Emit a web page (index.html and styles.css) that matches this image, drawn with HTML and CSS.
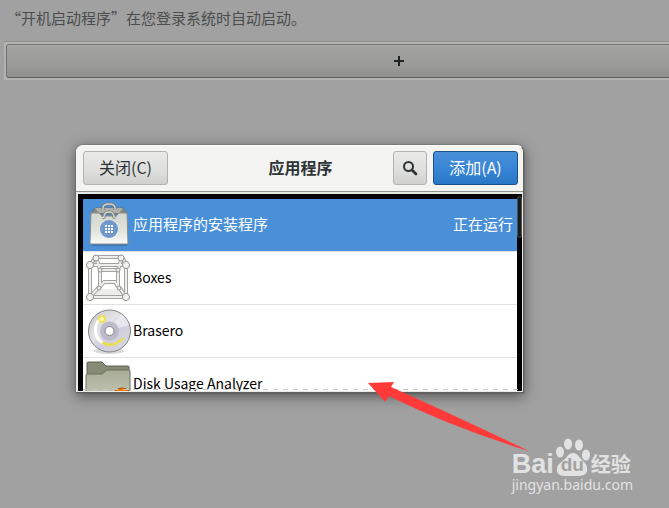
FILE: index.html
```html
<!DOCTYPE html>
<html lang="zh-CN">
<head>
    <meta charset="UTF-8">
    <meta name="viewport" content="width=device-width, initial-scale=1.0">
    <title>开机启动程序</title>
    <link rel="stylesheet" href="styles.css">
</head>
<body>
<main class="window">
    <p class="intro">“开机启动程序”在您登录系统时自动启动。</p>
    <div class="add-frame">
        <button class="add-row" type="button" aria-label="添加启动程序">
            <svg width="10" height="10" viewBox="0 0 10 10"><path d="M4 0h2v4h4v2H6v4H4V6H0V4h4z"/></svg>
        </button>
    </div>
</main>

<section class="dialog" role="dialog" aria-labelledby="dialog-title">
    <header class="dialog-header">
        <button class="btn btn-close" type="button">关闭(C)</button>
        <h1 id="dialog-title">应用程序</h1>
        <div class="header-actions">
            <button class="btn btn-search" type="button" aria-label="搜索">
                <svg width="16" height="16" viewBox="0 0 16 16" fill="none" stroke="#2e3436">
                    <circle cx="6.5" cy="6.5" r="4.5" stroke-width="2"/>
                    <path d="M10 10l4 4" stroke-width="2.6" stroke-linecap="round"/>
                </svg>
            </button>
            <button class="btn btn-add" type="button">添加(A)</button>
        </div>
    </header>
    <div class="list-frame">
        <ul class="app-list">
            <li class="app selected">
                <svg class="app-icon" viewBox="0 0 48 48">
                    <defs>
                        <linearGradient id="bag" x1="0" y1="0" x2="0" y2="1">
                            <stop offset="0" stop-color="#d3d7cf"/>
                            <stop offset=".6" stop-color="#e2e4de"/>
                            <stop offset="1" stop-color="#fbfbfa"/>
                        </linearGradient>
                    </defs>
                    <rect x="5" y="39" width="38" height="6" rx="3" fill="#23527f" opacity=".4"/>
                    <path d="M10 7h28l4 6H6z" fill="#888a85" stroke="#6d6f6b"/>
                    <path d="M10 7l4 5h20l4-5z" fill="#aeb0ab"/>
                    <path d="M18 9V7q0-4 6-4t6 4v2" fill="none" stroke="#777974" stroke-width="3"/>
                    <path d="M18 9V7q0-4 6-4t6 4v2" fill="none" stroke="#d3d7cf" stroke-width="1.4"/>
                    <path d="M6 12h8l3 3h14l3-3h8l1 31H5z" fill="url(#bag)" stroke="#8b8d88"/>
                    <path d="M17 17l2-1q0-5 5-5t5 5l2 1" fill="none" stroke="#777974" stroke-width="3"/>
                    <path d="M17 17l2-1q0-5 5-5t5 5l2 1" fill="none" stroke="#d3d7cf" stroke-width="1.4"/>
                    <circle cx="24" cy="28" r="9" fill="#6f97cb"/>
                    <path d="M20 24h2v2h-2zm3 0h2v2h-2zm3 0h2v2h-2zM20 27h2v2h-2zm3 0h2v2h-2zm3 0h2v2h-2zM20 30h2v2h-2zm3 0h2v2h-2zm3 0h2v2h-2z" fill="#fff"/>
                </svg>
                <span class="app-name">应用程序的安装程序</span>
                <span class="app-state">正在运行</span>
            </li>
            <li class="app">
                <svg class="app-icon" viewBox="0 0 48 48">
                    <ellipse cx="24" cy="40" rx="17" ry="5" fill="#000" opacity=".07"/>
                    <g fill="none" stroke="#a2a49f" stroke-width="4">
                        <path d="M18 28h13M13 35l6-7M35 35l-5-7"/>
                        <path d="M15 33V16h18v17"/>
                        <path d="M11 3h26M5 11l6-8M41 11l-4-8M11 3l4 13M37 3l-4 13M5 43l9-10M41 43l-7-10"/>
                        <path d="M5 11h36v32H5z"/>
                    </g>
                    <g fill="none" stroke="#eeeeec" stroke-width="2">
                        <path d="M18 28h13M13 35l6-7M35 35l-5-7"/>
                        <path d="M15 33V16h18v17"/>
                        <path d="M11 3h26M5 11l6-8M41 11l-4-8M11 3l4 13M37 3l-4 13M5 43l9-10M41 43l-7-10"/>
                        <path d="M5 11h36v32H5z"/>
                    </g>
                    <g fill="#f1f1ef" stroke="#94968f">
                        <circle cx="11" cy="4" r="3"/><circle cx="36" cy="4" r="3"/>
                        <circle cx="15" cy="16" r="2"/><circle cx="33" cy="16" r="2"/>
                        <circle cx="14" cy="34" r="2"/><circle cx="34" cy="34" r="2"/>
                        <circle cx="5" cy="11" r="3.6"/><circle cx="41" cy="11" r="3.6"/>
                        <circle cx="5" cy="43" r="3.6"/><circle cx="41" cy="43" r="3.6"/>
                    </g>
                </svg>
                <span class="app-name">Boxes</span>
            </li>
            <li class="app">
                <svg class="app-icon" viewBox="0 0 48 48">
                    <defs>
                        <linearGradient id="disc" x1="0" y1="0" x2="1" y2="1">
                            <stop offset="0" stop-color="#c3c5c6"/>
                            <stop offset=".4" stop-color="#e4e4e6"/>
                            <stop offset=".55" stop-color="#cfcde0"/>
                            <stop offset="1" stop-color="#d8dad6"/>
                        </linearGradient>
                    </defs>
                    <ellipse cx="24" cy="44" rx="15" ry="3" fill="#000" opacity=".15"/>
                    <circle cx="24.5" cy="24" r="21" fill="url(#disc)" stroke="#808284"/>
                    <path d="M24 24L36 7a21 21 0 0 1 8 11z" fill="#f5f5f8" opacity=".6"/>
                    <circle cx="24.5" cy="24" r="7" fill="none" stroke="#bcbacb" stroke-width="5"/>
                    <path d="M15 12A15 15 0 0 0 18 36" fill="none" stroke="#fff" stroke-width="3" stroke-linecap="round"/>
                    <path d="M18 36Q29 41 37 32" fill="none" stroke="#ecdf48" stroke-width="2.6" stroke-linecap="round"/>
                    <circle cx="17" cy="12" r="4" fill="#f4e235" opacity=".8"/>
                    <circle cx="17" cy="12" r="2" fill="#fffbb0"/>
                    <circle cx="24.5" cy="24" r="4.5" fill="#fff" stroke="#808284"/>
                </svg>
                <span class="app-name">Brasero</span>
            </li>
            <li class="app">
                <svg class="app-icon" viewBox="0 0 48 48">
                    <defs>
                        <linearGradient id="folder" x1="0" y1="0" x2="0" y2="1">
                            <stop offset="0" stop-color="#a9ad98"/>
                            <stop offset="1" stop-color="#c9ccba"/>
                        </linearGradient>
                    </defs>
                    <path d="M2 46V3q0-1 1-1h14l4 4h22q1 0 1 1v39z" fill="#868b76" stroke="#5f6353"/>
                    <path d="M1 46V15q0-1 1-1h15l5-4h22q1 0 1 1v35z" fill="url(#folder)" stroke="#6b6f5e"/>
                    <circle cx="37" cy="38" r="10" fill="#f57900" stroke="#b34b00"/>
                </svg>
                <span class="app-name">Disk Usage Analyzer</span>
            </li>
        </ul>
        <div class="scrollbar"></div>
    </div>
</section>

<svg class="arrow" width="162" height="70" viewBox="0 0 162 70">
    <path d="M0 2L26 1l-3 5Q90 36 161 70Q85 47 21 15l-4 6z" fill="#ff3a38"/>
</svg>

<div class="watermark">
    <div class="brand">
        <span class="brand-bai">Bai</span>
        <span class="paw">
            <svg width="35" height="38" viewBox="0 0 35 38" fill="#e2e2e2">
                <ellipse cx="5" cy="14" rx="4" ry="5.5"/>
                <ellipse cx="13" cy="6" rx="4" ry="5.5"/>
                <ellipse cx="24" cy="7" rx="4" ry="5.5"/>
                <ellipse cx="31" cy="17" rx="4" ry="5.5"/>
                <path d="M18 15q4 0 7 5l6 6q4 11-6 12H9Q-1 37 3 27l8-7q3-5 7-5z"/>
            </svg>
            <span class="brand-du">du</span>
        </span>
        <span class="brand-cn">经验</span>
    </div>
    <div class="brand-url">jingyan.baidu.com</div>
</div>
</body>
</html>
```
FILE: styles.css
```css
/* Global Styles */
* {
    box-sizing: border-box;
}

body {
    font-family: "Noto Sans CJK SC", "Noto Sans", sans-serif;
    font-size: 15px;
    line-height: 20px;
    background-color: #a1a1a1;
    color: #2e3436;
    margin: 0;
    min-height: 100vh;
    position: relative;
    overflow: hidden;
}

button {
    font: inherit;
    color: inherit;
    padding: 0;
}

/* Background window, runs past the right edge */
.window {
    margin-right: -125px;
}

.intro {
    margin: 0;
    padding: 8px 6px 13px;
    color: #4b4d4d;
}

.add-frame {
    margin-left: 4px;
    padding: 2px;
    border-top: 1px solid #8f8f8d;
    background-color: #b2b2b0;
}

.add-row {
    display: flex;
    align-items: center;
    justify-content: center;
    width: 100%;
    height: 34px;
    border: 1px solid #72726f;
    border-bottom-color: #61615e;
    border-radius: 3px;
    background: linear-gradient(#a3a3a0, #9b9b98 60%, #90908d);
    box-shadow: inset 0 1px #acacaa;
}

.add-row svg {
    fill: #1d2223;
}

/* Dialog */
.dialog {
    position: absolute;
    left: 76px;
    right: 145px;
    top: 145px;
    padding: 0 1px 1px;
    border: 1px solid #5f605d;
    border-width: 1px 1px 1px 0;
    border-top-color: #fff;
    border-radius: 7px 7px 1px 1px;
    background-color: #e8e8e6;
    box-shadow: 0 0 0 1px rgba(0, 0, 0, 0.1), 0 3px 14px rgba(0, 0, 0, 0.5);
}

.dialog-header {
    display: grid;
    grid-template-columns: 1fr auto 1fr;
    align-items: center;
    height: 46px;
    margin: 0 -1px;
    padding: 0 5px 2px 7px;
    border-bottom: 1px solid #92928e;
    border-radius: 6px 6px 0 0;
    background-color: #f4f4f3;
}

.dialog-header h1 {
    margin: 0;
    padding-bottom: 2px;
    font-size: 16px;
    line-height: 20px;
}

.header-actions {
    display: flex;
    justify-content: flex-end;
    gap: 6px;
}

.btn {
    display: flex;
    align-items: center;
    justify-content: center;
    width: 85px;
    height: 34px;
    padding-bottom: 2px;
    border: 1px solid #b3b3af;
    border-radius: 3px;
    font-size: 16px;
    background: linear-gradient(#e9e9e7, #dededc 60%, #d0d0cd);
}

.btn-search {
    width: 34px;
    padding: 0;
}

.btn-add {
    color: #fff;
    border-color: #1c5187;
    background: linear-gradient(#4a90d9, #3583d5 60%, #2a76c6);
}

/* Application list */
.list-frame {
    position: relative;
    margin: 2px 0 0 1px;
    padding: 5px 5px 0;
    background-color: #000;
    overflow: hidden;
}

.app-list {
    max-height: 192px;
    margin: 0;
    padding: 0;
    list-style: none;
    background-color: #fff;
    overflow: hidden;
}

.app {
    display: flex;
    align-items: center;
    height: 53px;
    padding: 0 4px 0 2px;
    border-bottom: 1px solid #e1e1e1;
    color: #000;
    font-size: 14px;
}

.app.selected {
    color: #fff;
    font-size: 15px;
    background-color: #4a90d9;
}

.app-icon {
    flex: none;
    width: 48px;
    height: 48px;
}

.app-name {
    flex: 1;
}

.app-name,
.app-state {
    padding-bottom: 3px;
}

.list-frame::after {
    content: "";
    position: absolute;
    left: 5px;
    right: 0;
    bottom: 1px;
    height: 1px;
    background: repeating-linear-gradient(90deg, #c5c5c3 0 5px, transparent 5px 10px);
}

.scrollbar {
    position: absolute;
    right: 0;
    top: 2px;
    width: 5px;
    height: 42px;
    border: 1px solid #4b4f50;
    border-radius: 3px;
    background-color: #191b1c;
}

/* Pointer arrow */
.arrow {
    position: absolute;
    left: 368px;
    top: 381px;
}

/* Watermark */
.watermark {
    position: absolute;
    right: 36px;
    bottom: 14px;
    color: #e2e2e2;
}

.brand {
    display: flex;
    align-items: flex-end;
    gap: 1px;
    height: 38px;
}

.brand-bai {
    font: bold 27px/24px "Liberation Sans", sans-serif;
}

.paw {
    position: relative;
    height: 38px;
}

.brand-du {
    position: absolute;
    left: 6px;
    bottom: 1px;
    font: bold 19px/20px "Liberation Sans", sans-serif;
    color: #a1a1a1;
}

.brand-cn {
    font-size: 20px;
    font-weight: bold;
    line-height: 24px;
}

.brand-url {
    font: 14px/18px "Noto Sans", sans-serif;
}
```
